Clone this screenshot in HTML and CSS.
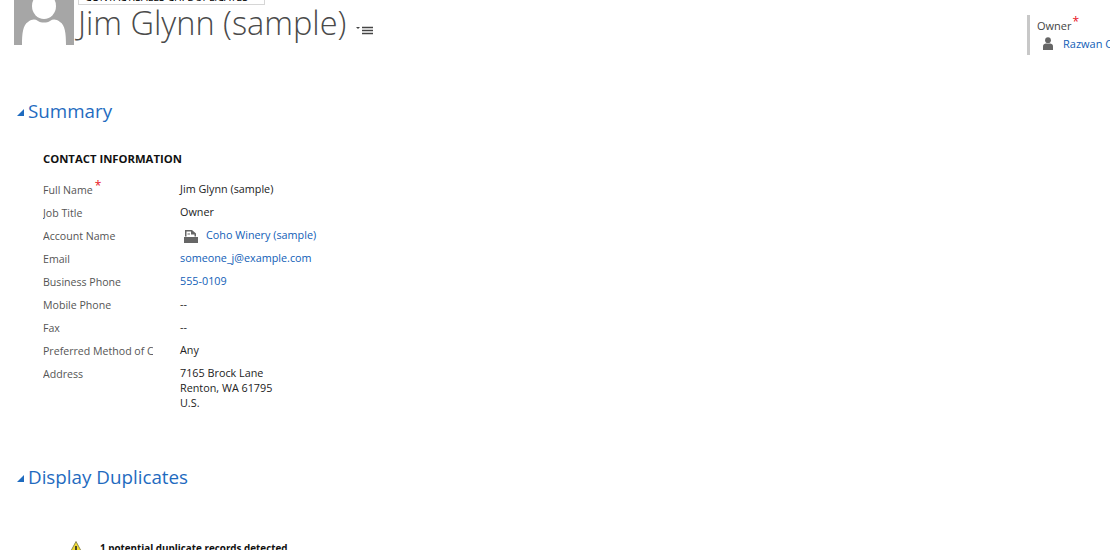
FILE: index.html
```html
<!DOCTYPE html>
<html lang="en">
<head>
<meta charset="utf-8">
<title>Jim Glynn (sample)</title>
<link rel="stylesheet" href="styles.css">
</head>
<body>
<div class="page">
  <header class="header">
    <svg class="avatar" viewBox="0 0 60 60" aria-hidden="true">
      <rect width="60" height="60" fill="#a6a6a6"/>
      <ellipse cx="30" cy="21" rx="12" ry="13" fill="#fff"/>
      <path d="M8 60C8 48 9 40 14 37C18 34 21 34 24 36C27 38 33 38 36 36C39 34 42 34 46 37C51 40 52 48 52 60z" fill="#fff"/>
    </svg>
    <div class="identity">
      <div class="crumb"><span class="crumb-text">CONTACT:SALES CH. DUPLICATES</span></div>
      <div class="title-row">
        <h1 class="title">Jim Glynn (sample)</h1>
        <svg class="menu-icon" viewBox="0 0 18 12" aria-hidden="true">
          <path d="M0 2h4L2 4z" fill="#444"/>
          <path d="M6 2.500h11M6 5.500h11M6 8.500h11" stroke="#444" stroke-width="1.500" fill="none"/>
        </svg>
      </div>
    </div>
    <div class="owner">
      <div class="owner-label">Owner<span class="req">*</span></div>
      <div class="owner-value">
        <svg class="person" viewBox="0 0 12 13" aria-hidden="true">
          <circle cx="6" cy="3.200" r="2.900" fill="#666"/>
          <path d="M1 13V9.500C1 7.500 2.500 6.600 4 6.600h4c1.500 0 3 .9 3 2.900V13z" fill="#666"/>
        </svg>
        <a class="link" href="#">Razwan Caraza</a>
      </div>
    </div>
  </header>

  <section class="section section-summary">
    <h2 class="section-title"><span class="tri"></span>Summary</h2>
    <div class="group">
      <h3 class="group-title">CONTACT INFORMATION</h3>
      <div class="rows">
        <div class="row"><div class="label">Full Name<span class="req req-field">*</span></div><div class="value">Jim Glynn (sample)</div></div>
        <div class="row"><div class="label">Job Title</div><div class="value">Owner</div></div>
        <div class="row"><div class="label">Account Name</div><div class="value value-icon">
          <svg class="account" viewBox="0 0 14 13" aria-hidden="true">
            <path d="M1 6.500V0h7l4 3.500v3h-1.500V4.500H7V1.500H2.500v5z" fill="#666"/>
            <path d="M3.500 3.500h2.500v1H3.500z" fill="#666"/>
            <path d="M0 7h14v6H0z" fill="#666"/>
          </svg>
          <a class="link" href="#">Coho Winery (sample)</a></div></div>
        <div class="row"><div class="label">Email</div><div class="value"><a class="link" href="#">someone_j@example.com</a></div></div>
        <div class="row"><div class="label">Business Phone</div><div class="value"><a class="link" href="#">555-0109</a></div></div>
        <div class="row"><div class="label">Mobile Phone</div><div class="value">--</div></div>
        <div class="row"><div class="label">Fax</div><div class="value">--</div></div>
        <div class="row"><div class="label">Preferred Method of Contact</div><div class="value">Any</div></div>
        <div class="row"><div class="label">Address</div><div class="value">7165 Brock Lane<br>Renton, WA 61795<br>U.S.</div></div>
      </div>
    </div>
  </section>

  <section class="section section-dupes">
    <h2 class="section-title"><span class="tri"></span>Display Duplicates</h2>
    <div class="notice">
      <svg class="warn" viewBox="0 0 16 15" aria-hidden="true">
        <path d="M8 .5 15.500 14.500H.5z" fill="#f2dc2e" stroke="#8d8a5a"/>
        <path d="M7.200 5h1.600v5.500H7.200zM7.200 11.500h1.600V13H7.200z" fill="#222"/>
      </svg>
      <span class="notice-text">1 potential duplicate records detected</span>
    </div>
  </section>
</div>
</body>
</html>
```
FILE: styles.css
```css
html, body {
  margin: 0;
  padding: 0;
  height: 100%;
  overflow: hidden;
  background: #fff;
}

.page {
  width: 1110px;
  height: 550px;
  overflow: hidden;
  font-family: "Open Sans", "Noto Sans", sans-serif;
  color: #262626;
}

.header {
  display: flex;
  align-items: flex-start;
  margin-top: -15px;
  padding-left: 14px;
  height: 70px;
}

.avatar {
  width: 60px;
  height: 60px;
  flex: none;
}

.identity {
  margin-left: 4px;
  width: 949px;
  flex: none;
}

.crumb {
  width: 185px;
  height: 18px;
  border: 1px solid #d6d6d6;
  overflow: hidden;
  display: flex;
  align-items: flex-end;
}

.crumb-text {
  font-size: 10.500px;
  line-height: 10px;
  margin-left: 6px;
  margin-bottom: 2px;
  white-space: nowrap;
  color: #000;
}

.title-row {
  display: flex;
  align-items: center;
  height: 38px;
  margin-top: -1px;
}

.title {
  margin: 0;
  font-size: 32.500px;
  font-weight: 300;
  line-height: 38px;
  color: #4a4a4a;
  white-space: nowrap;
}

.menu-icon {
  width: 18px;
  height: 12px;
  margin-left: 10px;
  margin-top: 15px;
}

.owner {
  flex: none;
  width: 83px;
  height: 40px;
  margin-top: 30px;
  border-left: 3px solid #c8c8c8;
  padding-left: 7px;
  box-sizing: border-box;
  overflow: hidden;
  white-space: nowrap;
  font-size: 11px;
  line-height: 15px;
}

.owner-label {
  color: #444;
  height: 21px;
  padding-top: 3px;
  box-sizing: border-box;
}

.owner-value {
  display: flex;
  align-items: center;
  height: 15px;
}

.person {
  width: 12px;
  height: 13px;
  margin-left: 5px;
  margin-right: 9px;
  flex: none;
}

.req {
  color: #e81123;
  font-size: 12px;
  position: relative;
  top: -4px;
  line-height: 0;
  margin-left: 1px;
}

.req-field {
  margin-left: 2px;
}

.link {
  color: #1160b7;
  text-decoration: none;
}

.section-title {
  margin: 0;
  display: flex;
  align-items: center;
  font-size: 18.800px;
  font-weight: 400;
  line-height: 28px;
  color: #1f6bbf;
  padding-left: 17px;
}

.tri {
  width: 0;
  height: 0;
  border-left: 7px solid transparent;
  border-bottom: 7px solid #1f6bbf;
  margin-right: 4px;
  margin-top: 2px;
}

.section-summary {
  margin-top: 42px;
}

.group {
  padding-left: 43px;
  margin-top: 26px;
}

.group-title {
  margin: 0 0 12px;
  font-size: 11.300px;
  line-height: 16px;
  font-weight: 700;
  color: #111;
}

.rows {
  display: flex;
  flex-direction: column;
}

.row {
  display: flex;
  min-height: 23px;
  line-height: 15px;
}

.label {
  width: 110px;
  margin-right: 27px;
  flex: none;
  overflow: hidden;
  white-space: nowrap;
  font-size: 10.600px;
  color: #555;
  padding-top: 4px;
}

.value {
  font-size: 10.800px;
  color: #222;
  padding-top: 2px;
}

.value-icon {
  display: flex;
  align-items: flex-start;
}

.account {
  width: 14px;
  height: 13px;
  margin: 3px 8px 0 4px;
  flex: none;
}

.section-dupes {
  margin-top: 53px;
}

.notice {
  display: flex;
  align-items: flex-start;
  padding-left: 68px;
  margin-top: 50px;
}

.warn {
  width: 16px;
  height: 15px;
  flex: none;
  margin-right: 16px;
}

.notice-text {
  font-size: 9.850px;
  font-weight: 700;
  line-height: 15px;
  color: #111;
}
```
